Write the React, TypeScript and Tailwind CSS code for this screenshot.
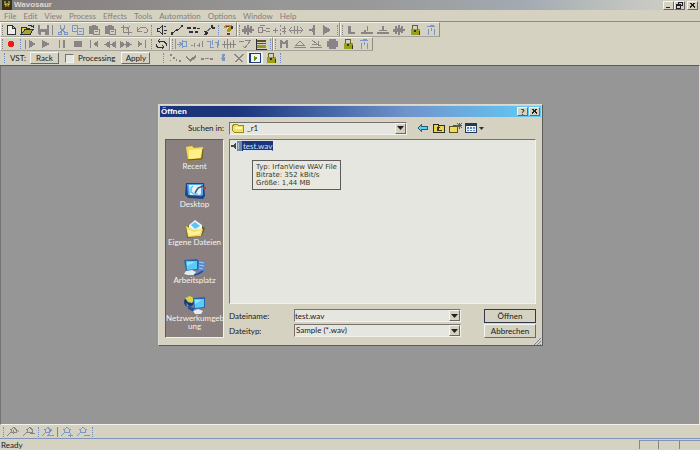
import React from "react";

type Shape = { d: string; c?: string; o?: boolean };

const G = "#8b8486";
const K = "#303038";
const B = "#7b95c4";

/* 16 x 12 glyphs; "o" marks an outlined shape */
const glyphs: Record<string, Shape[]> = {
  new: [{ d: "M5 2h4v3h3v5h-7z", c: "#eeeee8" }, { d: "M4.500 1.500h5l3 3v6h-8zM9.500 1.500v3h3", c: K, o: true }],
  open: [{ d: "M2 3h4l1 1h4v2h-6l-3 4z", c: "#e0d050" }, { d: "M5 6h9l-3 5h-9z", c: "#a8a42c" }, { d: "M2.500 10v-7h4l1 1h3v2M9 2l2-1 3 2v-2M2 10.500h9l3-5h-8z", c: K, o: true }],
  save: [{ d: "M3 1h11v10h-10l-1-1z", c: G }, { d: "M5 1h7v4h-7zM6 8h4v3h-4z", c: "#d9d6c8" }],
  cut: [{ d: "M6.500 1v3l4 4M10.500 1v3l-4 4M4 8.500h3v2h-3zM10 8.500h3v2h-3z", c: B, o: true }],
  copy: [{ d: "M2.500 1.500h5v6h-5zM7.500 4.500h6v6h-6zM4 4.500h2M9 7.500h3", c: B, o: true }],
  paste: [{ d: "M3 2h3v-1h4v1h2v3h-4v5h-5z", c: G }, { d: "M7.500 5.500h6v5h-6zM9 7.500h3", c: G, o: true }],
  crop: [{ d: "M5.500 1v7.500h8M3 3.500h7.500v7.500M8 6l4-4", c: G, o: true }],
  undo: [{ d: "M3.500 3v4h4M4 6l3-3h4l2 2v3l-3 1", c: G, o: true }],
  speaker: [{ d: "M4.500 4.500h2l3-3v9l-3-3h-2zM11 3l2-1M11 6h3M11 9l2 1", c: K, o: true }],
  env: [{ d: "M3 10l3-3 3-1 4-4", c: K, o: true }, { d: "M2 8h2v3h-2zM7 5h2v2h-2zM12 1h2v2h-2z", c: K }],
  nodes: [{ d: "M2 3h4v2h-4zM8 3h3v2h-3zM12 4h3v1h-3zM4 7h4v2h-4zM10 7h3v2h-3z", c: K }],
  wrench: [{ d: "M5 8l6-5", c: "#62626c", o: true }, { d: "M3 7h3v1h1v2h-1v1h-3v-1h1v-2h-1zM10 1h2v2h2v2h-3v-1h-1z", c: K }],
  help: [{ d: "M4 2l2-1h5l2 2v2l-3 2v1h-3v-3l2-1v-1h-2v1h-3z", c: "#a89c1c" }, { d: "M6 2h3v1h-3zM7 9h3v2h-3z", c: "#a02020" }, { d: "M11 2h2v3h-2z", c: K }],
  wave: [{ d: "M2 5h2v-3h2v2h1v-3h2v3h1v-2h2v3h2v2h-2v2h-2v-1h-1v3h-2v-3h-1v2h-2v-2h-2z", c: G }],
  waveopen: [{ d: "M2 3.500h4v5h-4zM4 1.500h5M7 6h3M10 4.500h4M10 7.500h4", c: G, o: true }],
  split: [{ d: "M1 6.500h5M3.500 4v5M8.500 1v2M8.500 5v2M8.500 9v2M10 4.500h4M10 7.500h4M12 2v8", c: G, o: true }],
  arrows: [{ d: "M1 6.500h14M4 3l-3 3 3 3M12 3l3 3-3 3M6.500 2v8M9.500 2v8", c: G, o: true }],
  left: [{ d: "M11 1v10h-2v-3l-6-2 6-2v-3z", c: G }],
  right: [{ d: "M3 1l8 5-8 5z", c: G }],
  ell: [{ d: "M5 2h3v6h4v2h-7z", c: G }],
  arrL: [{ d: "M2 8h12v2h-12zM5 6h2v4h-2zM8 2h1v5h-1z", c: G }],
  arrU: [{ d: "M2 8h12v2h-12zM7 2h2v4h3v1h-8v-1h3z", c: G }],
  lock: [{ d: "M4 5h9v6h-9z", c: "#9aa01c" }, { d: "M5.500 5v-3.500h5v4", c: "#62651a", o: true }, { d: "M7 6h2v2h-2zM12 7h1v4h-1z", c: K }],
  trash: [{ d: "M4 2.500h8M5.500 5v6M8.500 4v3M11.500 5v6M7 1.500h4", c: B, o: true }],
  rec: [{ d: "M6 3h4v1h1v4h-1v1h-4v-1h-1v-4h1z", c: "#f01818" }],
  play1: [{ d: "M3 2h1v9h-1zM7 2l7 4-7 4z", c: G }],
  play: [{ d: "M4 2l8 4-8 4z", c: G }],
  pause: [{ d: "M5 2h1v8h-1zM9 2h2v8h-2z", c: G }],
  stop: [{ d: "M4 3h8v6h-8z", c: G }],
  start: [{ d: "M4 2h1v8h-1zM12 3v6l-5-3z", c: G }],
  rew: [{ d: "M8 3v7l-6-3.500zM14 3v7l-6-3.500z", c: G }],
  fwd: [{ d: "M2 3v7l6-3.500zM8 3v7l6-3.500z", c: G }],
  end: [{ d: "M4 3v6l5-3zM11 2h1v8h-1z", c: G }],
  loop: [{ d: "M6 3.500h5l2 2v2M10 9.500h-5l-2-2v-2M7 1l-2 2 2 2M9 7l2 2-2 2", c: K, o: true }],
  marks: [{ d: "M2.500 1v10M4 6.500h4M6 4l3 2-3 3M9.500 2v8M10 3.500h3v5h-3", c: B, o: true }],
  dots: [{ d: "M2 7.500h2M5 5v4M7.500 7h2M10.500 5v4M13 3v6", c: G, o: true }],
  loopw: [{ d: "M2 3.500h3v6h4M7 2v5M10 4h2v6M13.500 2v6", c: B, o: true }],
  spikes: [{ d: "M1 6.500h14M3.500 3v7M6.500 1v10M9.500 4v6M12.500 2v8", c: G, o: true }],
  fade: [{ d: "M2 3.500h5M8 2.500h6M6 8l2 2 5-7", c: G, o: true }],
  chart: [{ d: "M3 1v10h11", c: K, o: true }, { d: "M4 2h9v2h-9zM4 5h9v1h-9z", c: "#55552c" }, { d: "M4 7h9v3h-9z", c: "#969a20" }],
  em: [{ d: "M4 2h2l2 3 2-3h2v8h-2v-4h-4v4h-2z", c: G }],
  upL: [{ d: "M2 9.500h12M4 7l4-4 4 4z", c: G, o: true }],
  dnR: [{ d: "M2 9.500h12M4 2l5 4h-5M10 3v4h3", c: G, o: true }],
  blob: [{ d: "M3 3h2v-2h7v2h2v6h-2v2h-7v-2h-2z", c: G }],
  curve: [{ d: "M3 2h2v2h-2zM6 5h2v2h-2zM9 7h1v2h-1zM12 8h2v2h-2zM3 8h1v1h-1z", c: G }],
  check: [{ d: "M3 4l4 3 6-4v3l-6 4-4-4z", c: G }],
  dash: [{ d: "M2 6h3v2h-3zM6 6h4v1h-4zM11 6h3v2h-3z", c: G }],
  caret: [{ d: "M7 2h3v2h-1v1h1v4h-3v-2h-1v-1h1z", c: B }],
  cross: [{ d: "M4 2l8 8M12 2l-8 8M3 2l8 8M13 2l-8 8", c: G, o: true }],
  boxed: [{ d: "M3 2h11v8h-11z", c: "#f4f6f4" }, { d: "M2.500 1.500h11v9h-11zM3.500 2v8", c: "#1c3f82", o: true }, { d: "M7 4l4 2-4 3z", c: "#75851c" }],
  zin: [{ d: "M2 10l4-4M6 3.500l3-2 2 2v3h-4zM12 4l2 2M8 8v-4", c: G, o: true }],
  zout: [{ d: "M2 10l4-4M6 3.500l3-2 2 2v3h-4zM9 7h5", c: G, o: true }],
  zsel: [{ d: "M2 10l3-3M5 3.500l3-2 2 2-1 3h-3zM12 3l-4 6.500h6", c: B, o: true }],
  zplus: [{ d: "M2 10l3-3M5 3.500l3-2 3 2-1 3h-4zM9 9h5M11.500 7v4", c: B, o: true }],
  zminus: [{ d: "M2 10l3-3M5 3.500l3-2 3 2-1 3h-4zM9 9.500h6", c: B, o: true }],
  back: [{ d: "M7 2v2h6v4h-6v2l-5-4z", c: "#2c5a70" }, { d: "M6 4v1h6v2h-6v1l-3-2z", c: "#58d0f8" }],
  up: [{ d: "M2 2h5l1 1h6v8h-12z", c: "#2e2e20" }, { d: "M3 3h3l1 1h6v6h-10z", c: "#e4d84c" }, { d: "M6 9v-3h-1l2-2 2 2h-1v2h3v1z", c: "#56301c" }],
  newdir: [{ d: "M2 4h3l1-1h5v8h-9z", c: "#5d521c" }, { d: "M3 5h7v5h-7z", c: "#f0dc58" }, { d: "M12.500 1v6M9 3.500h6M10 1l5 5M15 1l-5 5", c: "#606060", o: true }],
  view: [{ d: "M2 1h12v10h-12z", c: "#24385c" }, { d: "M3 4h10v6h-10z", c: "#eef0ee" }, { d: "M4 5h2v2h-2zM7 5h2v2h-2zM10 5h2v2h-2zM4 8h2v1h-2zM7 8h2v1h-2zM10 8h2v1h-2z", c: "#6288c4" }],
  folder: [{ d: "M3 2h4l1 1h5l1 1v6l-1 1h-9l-2-2v-6z", c: "#9c8a20" }, { d: "M4 3h3l1 1h5v5l-1 1h-8l-1-2v-4z", c: "#f4e060" }, { d: "M5 5h7v2h-7z", c: "#fff8b0" }],
  wavfile: [{ d: "M1 5h2l3-3v8l-3-3h-2z", c: "#444850" }, { d: "M7 1h5v10h-5z", c: "#7088ac" }, { d: "M8 3h1v6h-1z", c: "#b0c4dc" }],
};

function Glyph({ name }: { name: string }) {
  return (
    <svg viewBox="0 0 16 12" className="block h-3 w-4 shrink-0" shapeRendering="crispEdges" aria-hidden="true">
      {glyphs[name].map((s, i) => (
        <path key={i} d={s.d} fill={s.o ? "none" : s.c} stroke={s.o ? s.c : "none"} strokeWidth="1" />
      ))}
    </svg>
  );
}

function Tools({ names }: { names: string[] }) {
  return (
    <>
      {names.map((n, i) =>
        n === "|" ? (
          <Line key={i} />
        ) : n === ":" ? (
          <Dots key={i} />
        ) : (
          <button key={i} type="button" aria-label={n} className={n === "boxed" ? "bg-[#f0f0ea]" : ""}>
            <Glyph name={n} />
          </button>
        ),
      )}
    </>
  );
}

const Line = () => <span className="mx-px h-[10px] w-px shrink-0 bg-[#8b8486]" />;
const Dots = () => <span className="mx-px h-[10px] w-0 shrink-0 border-l border-dotted border-[#6f8cc0]" />;

function Bar({ children }: { children: React.ReactNode }) {
  return (
    <div className="flex h-full items-center border-t border-r border-b border-l border-t-[#f2f1ea] border-r-[#8f8b88] border-b-[#a5a29a] border-l-[#f2f1ea] pl-px">
      <span className="h-[10px] border-l border-dotted border-[#8b8486]" />
      {children}
    </div>
  );
}

const raised = "border border-t-[#f6f6f0] border-l-[#f6f6f0] border-r-[#6d6868] border-b-[#6d6868] bg-[#d5d2c1]";
const sunken = "border border-t-[#77726f] border-l-[#77726f] border-r-[#f2f1ea] border-b-[#f2f1ea] bg-[#e6e6e1]";

function Caption({ label, kind }: { label: string; kind: "min" | "max" | "close" | "help" }) {
  return (
    <button type="button" aria-label={label} className={`flex h-[9px] w-[11px] items-center justify-center ${raised}`}>
      {kind === "help" ? (
        <span className="text-[8px] leading-none font-bold">?</span>
      ) : (
        <svg viewBox="0 0 9 7" className="h-[7px] w-[9px]" fill="none" stroke="#202028" shapeRendering="crispEdges">
          {kind === "min" && <path d="M2 5.500h4" />}
          {kind === "max" && <path d="M3.500 2.500v-2h4v3h-2M1.500 2.500h4v4h-4zM1 3.500h4" />}
          {kind === "close" && <path d="M2 1l5 5M7 1l-5 5M3 1l4 4M6 1l-4 4" />}
        </svg>
      )}
    </button>
  );
}

function Arrow() {
  return (
    <svg viewBox="0 0 7 4" className="h-1 w-[7px]" aria-hidden="true">
      <path d="M0 0h7l-3.500 4z" fill="#202028" />
    </svg>
  );
}

function Drop({ id, value, icon }: { id: string; value: string; icon?: string }) {
  return (
    <div className={`flex h-[13px] min-w-0 flex-1 items-center ${sunken}`}>
      {icon && <span><Glyph name={icon} /></span>}
      <select id={id} className="h-[11px] min-w-0 flex-1 appearance-none bg-transparent pl-px leading-[11px] outline-none">
        <option>{value}</option>
      </select>
      <span className={`flex h-[11px] w-[11px] items-center justify-center ${raised}`}><Arrow /></span>
    </div>
  );
}

function PlaceArt({ kind }: { kind: string }) {
  return (
    <svg viewBox="0 0 24 18" className="h-[18px] w-6" aria-hidden="true">
      {kind === "recent" && (
        <>
          <path d="M3 3l6-1 2 2 9-1 1 2-2 11-14 1z" fill="#a89030" />
          <path d="M3 3l6-1 2 2 9-1-2 11-13 1z" fill="#f2dc58" />
          <path d="M6 6l13-1-2 9-11 1z" fill="#fff08c" />
          <path d="M5 16l14-1 1-10" fill="none" stroke="#6b5a1c" />
        </>
      )}
      {kind === "desktop" && (
        <>
          <path d="M3 1h18l1 13-2 3-15-1-3-3z" fill="#1c4488" />
          <path d="M4 2h16v11l-2 1-13-1z" fill="#4ca8e8" />
          <path d="M6 3h12v9l-2 1h-9z" fill="#e8f2f6" />
          <path d="M10 4l-2 2v4l3 2h4" stroke="#58c4f4" strokeWidth="1.500" fill="none" />
          <path d="M12 11l3-5 5-2" stroke="#405878" strokeWidth="1.500" fill="none" />
          <path d="M20 5h3v2h-3z" fill="#e02828" />
        </>
      )}
      {kind === "files" && (
        <>
          <path d="M3 8l8-7 11 7-3 8-15 2z" fill="#6c5c20" />
          <path d="M6 5l6-5 7 5v7h-13z" fill="#e8f4f8" />
          <path d="M8 5l4-3 5 4-5 3z" fill="#60c4f0" />
          <path d="M3 6l8 4 9-1-2 7-13 1z" fill="#f4dc60" />
          <path d="M4 9l7 3 7-2-1 4-11 2z" fill="#fff294" />
        </>
      )}
      {kind === "computer" && (
        <>
          <path d="M14 2l8 1v10l-7 3z" fill="#6088c4" />
          <path d="M16 4l5 1M16 7l5 1M16 10l4 1" stroke="#a8cce8" />
          <path d="M1 2l13-1 2 2-1 9-12 1z" fill="#2468b0" />
          <path d="M3 3h11v8l-10 1z" fill="#58ccf8" />
          <path d="M4 4h8l-8 4z" fill="#98e0fc" />
          <path d="M3 13l6-1 4 2-2 3h-6l-4-1z" fill="#e4ecf0" />
          <path d="M11 17l4-1 5-3" stroke="#2050a0" strokeWidth="1.500" fill="none" />
        </>
      )}
      {kind === "network" && (
        <>
          <circle cx="6" cy="6" r="5" fill="#1c3c78" />
          <path d="M2 2l5-2 5 3-3 4-4-1z" fill="#dcd444" />
          <path d="M3 7l4 4-3-1z" fill="#58b4e8" />
          <path d="M10 2l12-1v11l-11 1z" fill="#2468b0" />
          <path d="M11 3h10v8l-9 1z" fill="#58ccf8" />
          <path d="M12 4h7l-7 4z" fill="#98e0fc" />
          <path d="M5 10l6 2v4l-6-3z" fill="#2850a4" />
          <path d="M10 15l5-2 5 2-2 3h-6z" fill="#e4ecf0" />
        </>
      )}
    </svg>
  );
}

const places = [
  ["recent", "Recent"],
  ["desktop", "Desktop"],
  ["files", "Eigene Dateien"],
  ["computer", "Arbeitsplatz"],
  ["network", "Netzwerkumgeb ung"],
];

function OpenDialog() {
  return (
    <section
      role="dialog"
      aria-label="Öffnen"
      className="absolute top-[38px] left-[157px] w-[385px] border border-t-[#dedbce] border-r-[#5e5b5b] border-b-[#5e5b5b] border-l-[#dedbce] bg-[#d5d2c1] p-px"
    >
      <header className="flex h-[11px] items-center bg-linear-to-r from-[#1c347c] from-20% via-[#7094cc] via-65% to-[#5cccf8] pr-px text-white">
        <h2 className="flex-1 pl-px font-['Liberation_Sans',sans-serif] text-[8px] leading-none font-bold">Öffnen</h2>
        <div className="flex gap-px text-[#202028]">
          <Caption label="Help" kind="help" />
          <Caption label="Close" kind="close" />
        </div>
      </header>
      <div className="flex h-[22px] items-center">
        <label htmlFor="look" className="w-[69px] shrink-0 pr-[5px] text-right">Suchen in:</label>
        <div className="flex w-[178px]"><Drop id="look" value="_r1" icon="folder" /></div>
        <div className="flex items-center pl-2">
          <Tools names={["back", "up", "newdir", "view"]} />
          <svg viewBox="0 0 5 3" className="h-[3px] w-[5px]" aria-hidden="true"><path d="M0 0h5l-2.500 3z" fill="#303038" /></svg>
        </div>
      </div>
      <div className="flex gap-[5px] px-[5px] pb-[6px]">
        <nav className="flex w-[59px] shrink-0 flex-col border border-t-[#5e5b5b] border-r-[#f2f1ea] border-b-[#f2f1ea] border-l-[#5e5b5b] bg-[#8a8080] pt-1 text-[#f4f4f0]">
          {places.map(([kind, name]) => (
            <button key={kind} type="button" className="flex min-h-[38px] flex-col items-center">
              <PlaceArt kind={kind} />
              <span className="w-full text-center leading-[8px]">{name}</span>
            </button>
          ))}
        </nav>
        <div className="min-w-0 flex-1">
          <div className="relative h-[165px] border border-t-[#77726f] border-r-[#f2f1ea] border-b-[#f2f1ea] border-l-[#77726f] bg-[#e6e6e1]">
            <button type="button" className="flex h-[11px] items-center">
              <span className="-mr-1"><Glyph name="wavfile" /></span>
              <span className="h-[10px] bg-[#1c347c] px-px text-[8px] leading-[10px] text-[#d8e4f4] underline">test.wav</span>
            </button>
            <div role="tooltip" className="absolute top-5 left-[22px] border border-[#5e5b5b] bg-[#e8e8e0] px-[3px] py-[2px] font-['DejaVu_Sans',sans-serif] text-[7px] leading-[8px] whitespace-nowrap text-[#3c3820]">
              <p>Typ: IrfanView WAV File</p>
              <p>Bitrate: 352 kBit/s</p>
              <p>Größe: 1,44 MB</p>
            </div>
          </div>
          <div className="flex gap-[23px] pt-[5px]">
            <div className="flex min-w-0 flex-1 flex-col gap-[2px]">
              <div className="flex items-center">
                <label htmlFor="fname" className="w-[65px]">Dateiname:</label>
                <div className={`flex h-[13px] min-w-0 flex-1 items-center ${sunken}`}>
                  <input id="fname" type="text" defaultValue="test.wav" className="h-[11px] min-w-0 flex-1 bg-transparent outline-none" />
                  <button type="button" aria-label="Show names" className={`flex h-[11px] w-[11px] items-center justify-center ${raised}`}><Arrow /></button>
                </div>
              </div>
              <div className="flex items-center">
                <label htmlFor="ftype" className="w-[65px]">Dateityp:</label>
                <Drop id="ftype" value="Sample (*.wav)" />
              </div>
            </div>
            <div className="flex w-[52px] flex-col gap-px">
              <button type="button" className="h-[14px] border border-[#303850] bg-[#d5d2c1] leading-none">Öffnen</button>
              <button type="button" className={`h-[14px] leading-none ${raised}`}>Abbrechen</button>
            </div>
          </div>
        </div>
      </div>
      <svg viewBox="0 0 8 7" className="absolute right-px bottom-0 h-[7px] w-2" stroke="#77859c" aria-hidden="true">
        <path d="M1 7l7-7M4 7l4-4M7 7l1-1" />
      </svg>
    </section>
  );
}

export default function App() {
  return (
    <div className="flex h-screen flex-col overflow-hidden bg-[#d5d2c1] font-[Lato,'Liberation_Sans',sans-serif] text-[8px] leading-[10px] text-[#181820]">
      <header className="flex h-[10px] shrink-0 items-center bg-[linear-gradient(to_right,#857c7c,#979797_40%,#979797_50%,#a3aab2_75%,#c6c8c2_92%,#d3d1c3)] pr-[2px] pl-[2px]">
        <svg viewBox="0 0 10 10" className="h-[10px] w-[10px]" shapeRendering="crispEdges" aria-hidden="true">
          <path d="M0 0h10v10h-10z" fill="#34341c" />
          <path d="M2 1h2v2h2v-2h2v4h-1v2h-4v-2h-1z" fill="#8b8a28" />
          <path d="M3 4h1v1h-1zM6 4h1v1h-1z" fill="#e0d850" />
          <path d="M4 6h2v1h-2z" fill="#b02020" />
        </svg>
        <h1 className="flex-1 pl-[2px] font-['Liberation_Sans',sans-serif] font-bold text-[#dcdad2]">Wavosaur</h1>
        <div className="flex">
          <Caption label="Minimize" kind="min" />
          <Caption label="Restore" kind="max" />
          <span className="w-[2px]" />
          <Caption label="Close" kind="close" />
        </div>
      </header>
      <nav className="flex h-3 shrink-0 items-center gap-[7px] border-b border-[#8f8b88] pl-1 text-[#857d80]">
        {["File", "Edit", "View", "Process", "Effects", "Tools", "Automation", "Options", "Window", "Help"].map((m) => (
          <button key={m} type="button">{m}</button>
        ))}
      </nav>
      <div className="flex h-[15px] shrink-0">
        <Bar><Tools names={["new", "open", "save", "|", "cut", "copy", "paste", "paste", "crop", "undo", ":", "speaker", "env", "nodes", "wrench", ":", "help"]} /></Bar>
        <Bar><Tools names={["wave", "waveopen", "split", "arrows", "left", "right", ":"]} /></Bar>
        <Bar><Tools names={["ell", "arrL", "arrU", "wave", "lock", "trash"]} /></Bar>
      </div>
      <div className="flex h-[14px] shrink-0">
        <Bar><Tools names={["rec", ":", "play1", "play", "pause", "stop", "start", "rew", "fwd", "end", ":", "loop"]} /></Bar>
        <Bar><Tools names={["marks", "dots", "loopw", "spikes", "fade", "chart", ":"]} /></Bar>
        <Bar><Tools names={["em", "upL", "dnR", "blob", "lock", "trash"]} /></Bar>
      </div>
      <div className="flex h-[14px] shrink-0 items-center pl-[3px]">
        <Dots />
        <span className="pr-1 pl-1">VST:</span>
        <button type="button" className={`h-[12px] w-[29px] leading-none ${raised}`}>Rack</button>
        <label className="flex items-center gap-1 pl-[6px]">
          <input type="checkbox" className={`h-[9px] w-[9px] appearance-none ${sunken}`} />
          Processing
        </label>
        <button type="button" className={`ml-[6px] h-[12px] w-[29px] leading-none ${raised}`}>Apply</button>
        <span className="w-3" />
        <Dots />
        <span className="w-[2px]" />
        <Tools names={["curve", "check", "dash", "caret", "cross", "boxed", "lock", ":"]} />
      </div>
      <main className="relative min-h-0 flex-1 border-t border-r border-b border-l border-t-[#5e5b5b] border-r-[#e6e4da] border-b-[#f2f1ea] border-l-[#77726f] bg-[#969696]">
        <OpenDialog />
      </main>
      <div className="flex h-[14px] shrink-0 items-center border-b border-[#8095b8] pl-[2px]">
        <Dots />
        <Tools names={["zin", "zout", ":", "zsel", "|", "zplus", "zminus", ":"]} />
      </div>
      <footer className="flex h-[11px] shrink-0 items-center pl-px">
        <span className="flex-1">Ready</span>
        <span className="h-[9px] w-[19px] border-t border-l border-t-[#8095b8] border-l-[#8b8486]" />
        <span className="h-[9px] w-[21px] border-t border-l border-t-[#8095b8] border-l-[#8b8486]" />
        <span className="h-[9px] w-[21px] border-t border-l border-t-[#8095b8] border-l-[#8b8486]" />
      </footer>
    </div>
  );
}
